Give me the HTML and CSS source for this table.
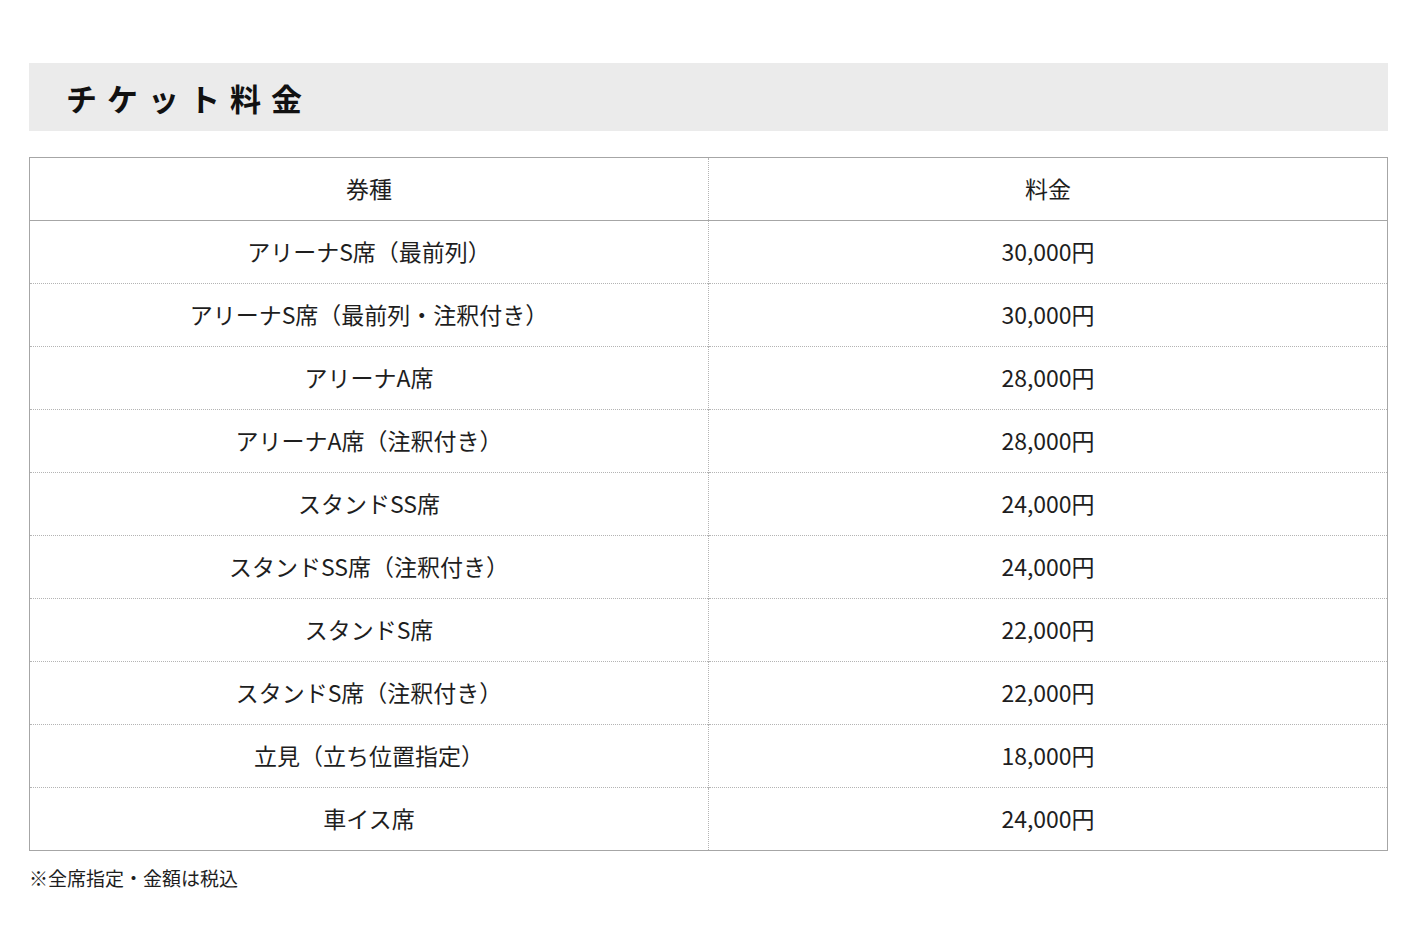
FILE: index.html
```html
<!DOCTYPE html>
<html lang="ja">
<head>
<meta charset="utf-8">
<title>チケット料金</title>
<link rel="stylesheet" href="styles.css">
</head>
<body>
<main class="page">
  <h2 class="heading">チケット料金</h2>
  <table class="price-table">
    <thead>
      <tr><th>券種</th><th>料金</th></tr>
    </thead>
    <tbody>
      <tr><td>アリーナS席（最前列）</td><td>30,000円</td></tr>
      <tr><td>アリーナS席（最前列・注釈付き）</td><td>30,000円</td></tr>
      <tr><td>アリーナA席</td><td>28,000円</td></tr>
      <tr><td>アリーナA席（注釈付き）</td><td>28,000円</td></tr>
      <tr><td>スタンドSS席</td><td>24,000円</td></tr>
      <tr><td>スタンドSS席（注釈付き）</td><td>24,000円</td></tr>
      <tr><td>スタンドS席</td><td>22,000円</td></tr>
      <tr><td>スタンドS席（注釈付き）</td><td>22,000円</td></tr>
      <tr><td>立見（立ち位置指定）</td><td>18,000円</td></tr>
      <tr><td>車イス席</td><td>24,000円</td></tr>
    </tbody>
  </table>
  <p class="note">※全席指定・金額は税込</p>
</main>
</body>
</html>
```
FILE: styles.css
```css
html, body {
  margin: 0;
  padding: 0;
  background: #ffffff;
}
body {
  font-family: "Noto Sans CJK JP", "Noto Sans", sans-serif;
  color: #1e1e1e;
}
.page {
  width: 1359px;
  padding: 63px 0 0 29px;
}
.heading {
  margin: 0;
  height: 68px;
  background: #ebebeb;
  display: flex;
  align-items: center;
  padding-left: 37px;
  font-size: 31px;
  font-weight: 700;
  letter-spacing: 10px;
  color: #111111;
}
.price-table {
  margin-top: 26px;
  width: 1359px;
  border-collapse: collapse;
  table-layout: fixed;
  border: 1px solid #a6a6a6;
}
.price-table th,
.price-table td {
  height: 60px;
  padding: 0 0 2px;
  text-align: center;
  vertical-align: middle;
  font-size: 23px;
  line-height: 30px;
  font-weight: 400;
  color: #1e1e1e;
  border-top: 1px dotted #b4b4b4;
}
.price-table th:first-child,
.price-table td:first-child {
  width: 678px;
  border-right: 1px dotted #b4b4b4;
}
.price-table thead th {
  border-bottom: 1px solid #a6a6a6;
}
.price-table tbody tr:first-child td {
  border-top: 1px solid #a6a6a6;
}
.note {
  margin: 14px 0 0;
  font-size: 19px;
  line-height: 26px;
  color: #1e1e1e;
}
```
